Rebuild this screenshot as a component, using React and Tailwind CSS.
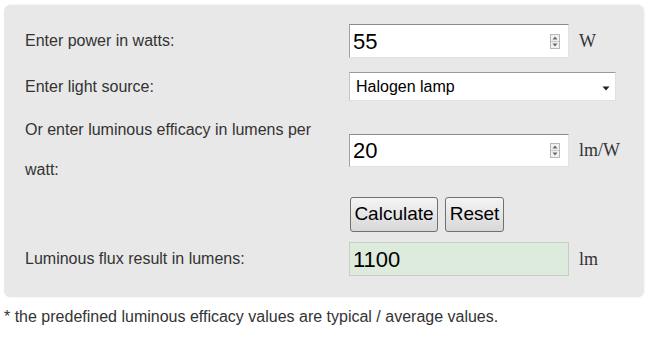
import React from "react";

function Spinner() {
  return (
    <div className="mr-[8px] flex h-[15px] w-[10px] flex-col border border-[#b8b8b8] bg-[#f0f0f0]">
      <div className="flex flex-1 items-center justify-center border-b border-[#c8c8c8]">
        <svg width="6" height="4" viewBox="0 0 6 4"><path d="M3 0.5 L5.5 3.5 L0.5 3.5 Z" fill="#6a6a6a" /></svg>
      </div>
      <div className="flex flex-1 items-center justify-center">
        <svg width="6" height="4" viewBox="0 0 6 4"><path d="M0.5 0.5 L5.5 0.5 L3 3.5 Z" fill="#6a6a6a" /></svg>
      </div>
    </div>
  );
}

function NumField({ value, h }) {
  return (
    <div
      className={`flex w-[220px] items-center border border-t-[#8a8a8a] border-l-[#a0a0a0] border-r-[#e2e2e2] border-b-[#e2e2e2] bg-white ${h}`}
    >
      <input
        readOnly
        value={value}
        className="min-w-0 flex-1 bg-transparent pl-[3px] text-[22px] text-black outline-none [font-family:'Liberation_Sans',Arial,sans-serif]"
      />
      <Spinner />
    </div>
  );
}

function Unit({ children }) {
  return (
    <span className="ml-[10px] text-[18px] text-[#333] [font-family:'Liberation_Serif','Times_New_Roman',serif]">
      {children}
    </span>
  );
}

function Btn({ children, w }) {
  return (
    <button
      className={`h-[35px] ${w} rounded-[3px] border border-[#707070] bg-gradient-to-b from-[#f4f4f4] to-[#d8d8d8] text-[19px] text-black [font-family:'Liberation_Sans',Arial,sans-serif]`}
    >
      {children}
    </button>
  );
}

export default function App() {
  return (
    <div className="h-[345px] w-[648px] bg-white pt-[5px] text-[16px] text-[#333] [font-family:'Liberation_Sans',Arial,sans-serif]">
      <div className="ml-[4px] flex w-[639px] flex-col rounded-[6px] bg-[#e8e8e8] pb-[21px] pl-[21px] pt-[19px] shadow-[1px_0_2px_rgba(0,0,0,0.12)]">
        <div className="flex h-[34px] items-center">
          <div className="w-[324px]">Enter power in watts:</div>
          <NumField value="55" h="h-[34px]" />
          <Unit>W</Unit>
        </div>
        <div className="mt-[14px] flex h-[29px] items-center">
          <div className="w-[324px]">Enter light source:</div>
          <div className="flex h-[29px] w-[267px] items-center justify-between border border-t-[#9a9a9a] border-l-[#c4c4c4] border-r-[#e0e0e0] border-b-[#e0e0e0] bg-white pl-[6px] pr-[5px] text-black">
            <span>Halogen lamp</span>
            <svg width="8" height="5" viewBox="0 0 8 5" className="mt-[3px]">
              <path d="M0.5 0.5 L7.5 0.5 L4 4.5 Z" fill="#222" />
            </svg>
          </div>
        </div>
        <div className="mt-[9px] flex h-[80px] items-center">
          <div className="w-[324px] pr-[10px] leading-[40px]">
            Or enter luminous efficacy in lumens per watt:
          </div>
          <NumField value="20" h="h-[33px]" />
          <Unit>lm/W</Unit>
        </div>
        <div className="mt-[6px] flex h-[36px] items-center">
          <div className="w-[325px]" />
          <div className="flex gap-[7px]">
            <Btn w="w-[88px]">Calculate</Btn>
            <Btn w="w-[59px]">Reset</Btn>
          </div>
        </div>
        <div className="mt-[10px] flex h-[34px] items-center">
          <div className="w-[324px]">Luminous flux result in lumens:</div>
          <div className="flex h-[34px] w-[220px] items-center border border-[#c6cec6] bg-[#dcebdc] pl-[3px] text-[22px] text-black">
            1100
          </div>
          <Unit>lm</Unit>
        </div>
      </div>
      <div className="ml-[4px] mt-[8px] leading-[24px]">
        * the predefined luminous efficacy values are typical / average values.
      </div>
    </div>
  );
}
